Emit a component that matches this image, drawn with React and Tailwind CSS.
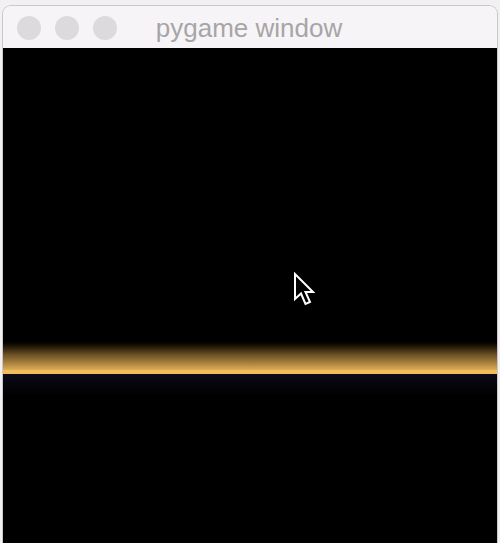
export default function App() {
  return (
    <div className="w-[500px] h-[543px] bg-[#f2f0f2] overflow-hidden pt-[5px] pl-[2px] pr-[2px]">
      <div className="w-[496px] h-[538px] flex flex-col rounded-t-[9px] border border-[#c9c7c9] border-b-0 overflow-hidden relative">
        <div className="h-[42px] bg-[#f6f4f6] flex items-center relative shrink-0">
          <div className="flex items-center gap-[14px] pl-[14px] pt-[1px]">
            <div className="w-[24px] h-[24px] rounded-full bg-[#dcdadc]" />
            <div className="w-[24px] h-[24px] rounded-full bg-[#dcdadc]" />
            <div className="w-[24px] h-[24px] rounded-full bg-[#dcdadc]" />
          </div>
          <div className="absolute inset-0 flex items-center justify-center pr-[2px] pt-[2px] text-[26px] text-[#a7a5a7] font-['Liberation_Sans',Arial,sans-serif]">
            pygame window
          </div>
        </div>
        <div className="flex-1 bg-black flex flex-col">
          <div className="h-[291px]" />
          <div className="h-[31px] bg-gradient-to-b from-[#000000] via-[#6a5025] to-[#e0ac55]" />
          <div className="h-[4px] bg-[#f0bd5e]" />
          <div className="h-[20px] bg-gradient-to-b from-[#0c0b18] to-[#020204]" />
          <div className="flex-1" />
        </div>
        <svg className="absolute left-[290px] top-[266px]" width="24" height="36" viewBox="0 0 24 36">
          <path d="M2 2 L2 27 L8 21.5 L12.5 32 L17 30 L12.5 20 L20 20 Z" fill="black" stroke="white" strokeWidth="2" strokeLinejoin="miter" />
        </svg>
      </div>
    </div>
  );
}
